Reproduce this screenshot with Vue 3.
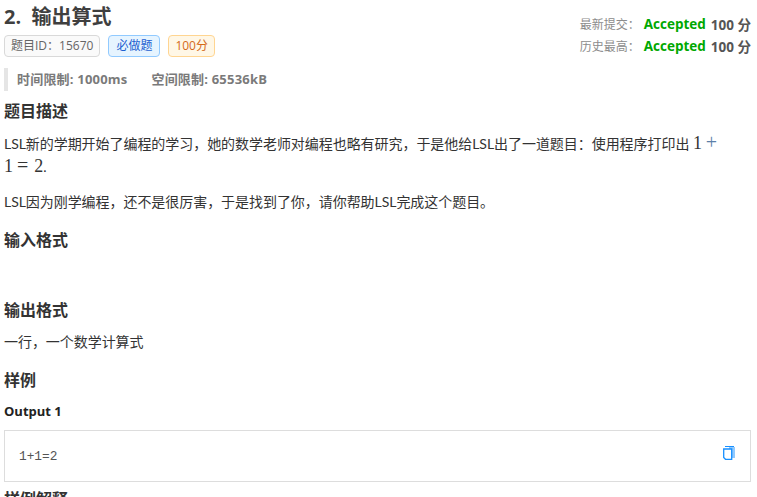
<template>
  <div class="page">
    <header class="top">
      <div class="top-left">
        <h1 class="title">2.&nbsp; 输出算式</h1>
        <div class="tags">
          <span class="tag tag-grey">题目ID：15670</span>
          <span class="tag tag-blue">必做题</span>
          <span class="tag tag-orange">100分</span>
        </div>
      </div>
      <div class="status">
        <div v-for="row in statusRows" :key="row.label" class="status-row">
          <span class="status-label">{{ row.label }}</span>
          <span class="accepted">Accepted</span>
          <span class="score">100 分</span>
        </div>
      </div>
    </header>

    <div class="limits">
      <span>时间限制: 1000ms</span>
      <span>空间限制: 65536kB</span>
    </div>

    <h2 class="first">题目描述</h2>
    <p>LSL新的学期开始了编程的学习，她的数学老师对编程也略有研究，于是他给LSL出了一道题目：使用程序打印出 <span class="math">1<span class="plus">+</span></span><br><span class="math">1<span class="eq">=</span>2</span>.</p>
    <p>LSL因为刚学编程，还不是很厉害，于是找到了你，请你帮助LSL完成这个题目。</p>

    <h2>输入格式</h2>
    <div class="empty"></div>

    <h2>输出格式</h2>
    <p>一行，一个数学计算式</p>

    <h2 class="sample-head">样例</h2>
    <h3>Output 1</h3>
    <div class="sample">
      <code>1+1=2</code>
      <svg class="copy" width="12" height="14" viewBox="0 0 12 14">
        <path d="M6 1h6v11H6z" fill="#91caff" />
        <path d="M2 .5h9" fill="none" stroke="#1890ff" stroke-width="1" />
        <path d="M.7 3h8v10.3H2.5L.7 11.5z" fill="#fff" stroke="#1890ff" stroke-width="1.3" />
      </svg>
    </div>

    <h2 class="last">样例解释</h2>
  </div>
</template>

<script setup>
const statusRows = [{ label: '最新提交：' }, { label: '历史最高：' }]
</script>

<style>
html,
body {
  margin: 0;
  height: 100%;
  overflow: hidden;
  background: #fff;
}
</style>

<style scoped>
.page {
  width: 747px;
  padding-left: 4px;
  padding-right: 6px;
  box-sizing: content-box;
  font-family: "Open Sans", "Noto Sans CJK SC", sans-serif;
  font-size: 14px;
  color: #333;
}

.top {
  display: flex;
  justify-content: space-between;
  height: 60px;
}

.title {
  margin: 0;
  font-size: 20px;
  line-height: 33px;
  font-weight: 700;
  color: #3f3f3f;
}

.tags {
  display: flex;
  gap: 8px;
  margin-top: 2px;
}

.tag {
  height: 22px;
  line-height: 20px;
  box-sizing: border-box;
  padding: 0 6px;
  border: 1px solid;
  border-radius: 4px;
  font-size: 12px;
}

.tag-grey {
  color: #666;
  background: #fafafa;
  border-color: #d9d9d9;
}

.tag-blue {
  padding: 0 7px;
  color: #1d5fd0;
  background: #e6f4ff;
  border-color: #91caff;
}

.tag-orange {
  color: #d4691a;
  background: #fff7e6;
  border-color: #ffd591;
}

.status {
  padding-top: 13px;
  font-size: 12px;
}

.status-row {
  display: flex;
  align-items: center;
  height: 22px;
}

.status-label {
  width: 64px;
  color: #8c8c8c;
}

.accepted {
  color: #00a800;
  font-weight: 700;
  font-size: 13.5px;
  margin-right: 5px;
}

.score {
  color: #555;
  font-weight: 700;
  font-size: 13.5px;
}

.limits {
  display: flex;
  gap: 24px;
  margin-top: 8px;
  height: 23px;
  line-height: 23px;
  padding-left: 9px;
  border-left: 4px solid #e5e5e5;
  font-size: 13px;
  font-weight: 700;
  letter-spacing: 0.2px;
  color: #7a7a7a;
}

h2 {
  margin: 16px 0 10px;
  font-size: 16px;
  line-height: 22px;
  font-weight: 700;
  color: #333;
}

h2.first {
  margin-top: 9px;
}

h2.sample-head {
  margin-top: 16px;
}

h3 {
  margin: 3px 0 9px;
  font-size: 13px;
  line-height: 20px;
  font-weight: 700;
  color: #222;
}

p {
  margin: 0 0 13px;
  line-height: 22px;
  letter-spacing: -0.05px;
  font-family: Lato, "Noto Sans CJK SC", sans-serif;
  color: #333;
}

.math {
  font-family: "Liberation Serif", serif;
  font-size: 18px;
}

.plus {
  margin-left: 4px;
  font-size: 20px;
  line-height: 1;
  color: #5b7fa8;
}

.eq {
  margin: 0 6px 0 4px;
  font-size: 20px;
  line-height: 1;
}

.empty {
  height: 22px;
}

.sample {
  display: flex;
  align-items: center;
  justify-content: space-between;
  height: 52px;
  box-sizing: border-box;
  padding: 0 15px 0 14px;
  border: 1px solid #ddd;
}

code {
  font-family: "Liberation Mono", monospace;
  font-size: 12.8px;
  color: #555;
}

.copy {
  margin-top: -7px;
}

h2.last {
  margin-top: 6px;
}
</style>
